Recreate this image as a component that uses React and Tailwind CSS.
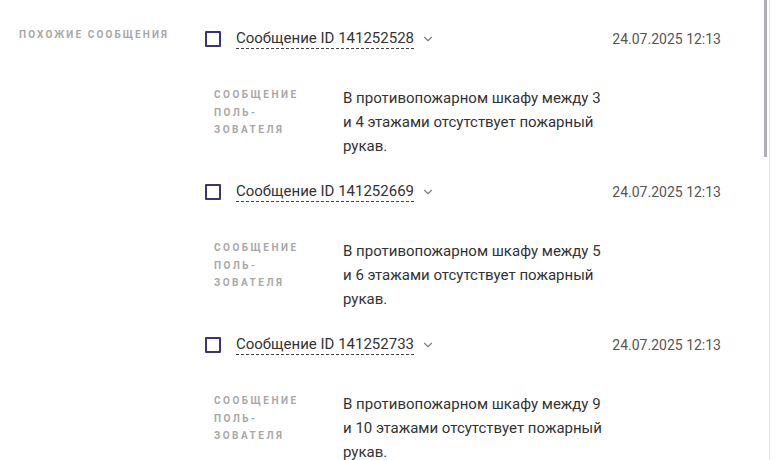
import { ChevronDown } from "lucide-react";

const items = [
  { id: "141252528", date: "24.07.2025 12:13", text: "В противопожарном шкафу между 3 и 4 этажами отсутствует пожарный рукав." },
  { id: "141252669", date: "24.07.2025 12:13", text: "В противопожарном шкафу между 5 и 6 этажами отсутствует пожарный рукав." },
  { id: "141252733", date: "24.07.2025 12:13", text: "В противопожарном шкафу между 9 и 10 этажами отсутствует пожарный рукав." },
];

function Item({ id, date, text }) {
  return (
    <div className="flex flex-col">
      <div className="flex h-[24px] items-center">
        <span className="h-[16px] w-[16px] shrink-0 rounded-[1px] border-2 border-[#3b3470]" />
        <span className="ml-[15px] border-b border-dashed border-[#444] text-[15px] leading-[19px] text-[#333]">
          Сообщение ID {id}
        </span>
        <ChevronDown size={14} strokeWidth={2} className="ml-[7px] text-[#7a7f8a]" />
        <span className="ml-auto text-[14px] text-[#555]">{date}</span>
      </div>
      <div className="mt-[33px] flex pl-[9px]">
        <div className="w-[129px] shrink-0 pt-[2px] text-[10px] font-bold uppercase leading-[17.5px] tracking-[0.25em] text-[#a8a8a8]">
          <div>Сообщение</div>
          <div>поль-</div>
          <div>зователя</div>
        </div>
        <p className="mt-[2px] w-[262px] text-[15px] leading-[24px] text-[#333]">{text}</p>
      </div>
    </div>
  );
}

export default function App() {
  return (
    <div className="flex h-[460px] w-[777px] overflow-hidden bg-white font-['Roboto','Liberation_Sans',sans-serif]">
      <div className="flex w-[762px] shrink-0 pt-[27px]">
        <div className="w-[205px] shrink-0 pl-[19px]">
          <div className="text-[10px] font-bold uppercase leading-[16px] tracking-[0.21em] text-[#a8a8a8]">
            Похожие сообщения
          </div>
        </div>
        <div className="flex w-[516px] shrink-0 flex-col gap-[22px]">
          {items.map((it) => (
            <Item key={it.id} {...it} />
          ))}
        </div>
      </div>
      <div className="flex h-full w-[8px] shrink-0 border-r border-[#e4e4e4] pl-[2px]">
        <div className="h-[157px] w-[3px] bg-[#b0b0b4]" />
      </div>
    </div>
  );
}
